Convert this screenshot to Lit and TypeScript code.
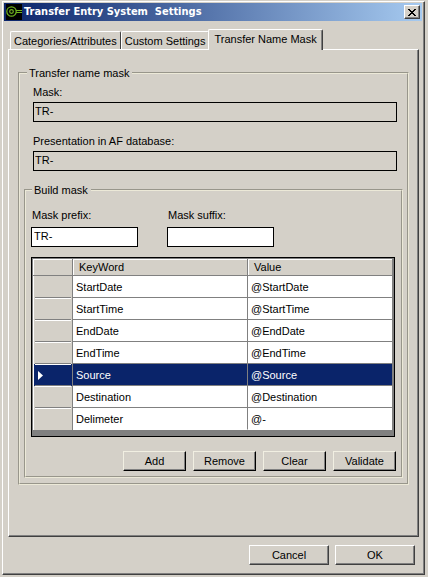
import { LitElement, html, css, svg, nothing } from "lit";
import { customElement, state } from "lit/decorators.js";
import { classMap } from "lit/directives/class-map.js";

interface Row {
  key: string;
  value: string;
}

const keyIcon = svg`
  <svg class="app-icon" viewBox="0 0 16 16" width="16" height="16" aria-hidden="true">
    <rect width="16" height="16" fill="#000" />
    <g fill="none" stroke="#6fb41e" stroke-width="1.2">
      <circle cx="5.5" cy="7.5" r="4.7" />
      <circle cx="5.5" cy="7.5" r="1.8" />
      <path d="M10 6.5H16M10 8.5H16" />
    </g>
  </svg>`;

@customElement("app-root")
export class AppRoot extends LitElement {
  static styles = css`
    :host {
      --face: #d4d0c8;
      --shadow: #808080;
      --dark: #404040;
      --navy: #0a246a;
      display: flex;
      box-sizing: border-box;
      min-height: 100vh;
      padding: 1px 3px 2px 2px;
      background: var(--face);
      color: #000;
      font: 11px/16px "Liberation Sans", Arial, sans-serif;
    }
    *, *::before, *::after { box-sizing: border-box; }
    button, input { font: inherit; color: inherit; border-radius: 0; margin: 0; }
    .window {
      flex: 1;
      min-width: 0;
      display: flex;
      flex-direction: column;
      padding: 1px 2px 1px 1px;
      border: 1px solid;
      border-color: #fff var(--dark) var(--dark) #fff;
      box-shadow: inset -1px -1px var(--shadow);
    }
    .titlebar {
      display: flex;
      align-items: center;
      gap: 2px;
      height: 18px;
      padding: 0 2px;
      background: linear-gradient(90deg, var(--navy), #a6caf0);
    }
    .app-icon { flex: none; display: block; }
    .title {
      flex: 1;
      margin: 0;
      color: #fff;
      font: bold 11px/16px "DejaVu Sans Condensed", "Noto Sans", sans-serif;
      white-space: pre;
    }
    .close {
      display: grid;
      place-items: center;
      width: 16px;
      height: 14px;
      padding: 0;
    }
    .btn, .close {
      background: var(--face);
      border: 1px solid;
      border-color: #fff var(--dark) var(--dark) #fff;
      box-shadow: inset -1px -1px var(--shadow);
    }
    .btn { width: 80px; height: 20px; padding: 0; }
    .btn.small {
      width: 63px;
      border-color: #f1efe2 #000 #000 #f1efe2;
    }
    .body {
      flex: 1;
      display: flex;
      flex-direction: column;
      padding: 8px 3px 0 4px;
    }
    .tabs { display: flex; align-items: flex-end; padding-left: 2px; }
    .tab {
      height: 18px;
      padding: 0 3px;
      white-space: nowrap;
      background: var(--face);
      border: 1px solid #fff;
      border-right-color: var(--dark);
      border-bottom: 0;
      border-radius: 2px 2px 0 0;
    }
    .tab.active {
      position: relative;
      z-index: 1;
      height: 21px;
      margin: 0 0 -1px -1px;
      padding: 0 5px 2px;
      box-shadow: inset -1px 0 var(--shadow);
    }
    .panel {
      flex: 1;
      padding: 15px 9px 50px 9px;
      border: 1px solid;
      border-color: #fff var(--dark) var(--dark) #fff;
      box-shadow: inset -1px -1px var(--shadow);
    }
    fieldset {
      min-width: 0;
      margin: 0;
      padding: 0 4px 5px;
      border: 2px groove #ece9d8;
    }
    legend { height: 16px; margin-left: 3px; padding: 0 3px 0 2px; }
    .fields { display: grid; gap: 11px; padding: 3px 6px 11px 9px; }
    .field { display: grid; gap: 2px; }
    .text {
      width: 100%;
      min-width: 0;
      height: 20px;
      padding: 0 2px 2px;
      border: 1px solid #000;
      background: #fff;
      outline: 0;
    }
    .text.locked { padding: 0 1px 2px; background: var(--face); }
    .build { padding: 0 5px 5px; }
    .build > legend { margin-left: 1px; }
    .affixes { display: flex; gap: 29px; padding: 9px 0 10px; }
    .affixes .field { gap: 4px; width: 107px; }
    .affixes label { padding-left: 1px; }
    .grid {
      margin-right: 1px;
      padding: 1px 2px 6px 1px;
      border: 1px solid #000;
      background: var(--shadow);
    }
    table {
      width: 100%;
      table-layout: fixed;
      border-collapse: separate;
      border-spacing: 0;
    }
    .c-mark { width: 40px; }
    .c-key { width: 175px; }
    th, td { font-weight: normal; text-align: left; white-space: nowrap; }
    thead th {
      height: 17px;
      padding: 0 6px;
      line-height: 16px;
      background: var(--face);
      border: 0 solid var(--shadow);
      border-width: 0 1px 1px 0;
      box-shadow: inset 1px 1px #fff;
    }
    tbody td {
      height: 22px;
      padding: 0 3px;
      background: #fff;
      border: 0 solid var(--shadow);
      border-width: 0 1px 1px 0;
    }
    thead th:last-child, tbody td:last-child { border-right: 0; }
    tbody .mark {
      padding: 0 1px 0 2px;
      background: var(--face);
      border-bottom: 0;
      box-shadow: inset 1px 0 #fff;
    }
    .mark-in {
      display: flex;
      align-items: center;
      height: 22px;
      padding-left: 3px;
      border-top: 1px solid #fff;
      border-bottom: 1px solid var(--shadow);
    }
    .selected td, .selected .mark { background: var(--navy); color: #fff; }
    tbody tr:first-child .mark-in { border-top-color: transparent; }
    tbody tr:last-child .mark-in { border-bottom-color: transparent; }
    tbody tr:last-child td { border-bottom-color: #fff; }
    .actions { display: flex; justify-content: flex-end; gap: 7px; padding-top: 14px; }
    .footer { display: flex; justify-content: flex-end; gap: 6px; padding: 8px 4px 8px; }
  `;

  @state() private selected = 4;
  @state() private tab = 2;
  @state() private rows: Row[] = [
    "StartDate", "StartTime", "EndDate", "EndTime", "Source", "Destination",
  ].map((key) => ({ key, value: "@" + key })).concat({ key: "Delimeter", value: "@-" });

  private tabs = ["Categories/Attributes", "Custom Settings", "Transfer Name Mask"];

  private field(id: string, label: string, value: string, locked = false) {
    return html`<div class="field">
      <label for=${id}>${label}</label>
      <input id=${id} type="text" class=${classMap({ text: true, locked })}
        .value=${value} ?readonly=${locked} />
    </div>`;
  }

  private row(row: Row, i: number) {
    const on = i === this.selected;
    return html`<tr class=${classMap({ selected: on })} @click=${() => (this.selected = i)}>
      <td class="mark"><div class="mark-in">${on
        ? html`<svg width="5" height="9" viewBox="0 0 5 9" aria-hidden="true"><path d="M0 0L5 4.5L0 9Z" fill="#fff" /></svg>`
        : nothing}</div></td>
      <td>${row.key}</td>
      <td>${row.value}</td>
    </tr>`;
  }

  render() {
    return html`
      <div class="window" role="dialog" aria-labelledby="title">
        <header class="titlebar">
          ${keyIcon}
          <h1 class="title" id="title">Transfer Entry System  Settings</h1>
          <button class="close" aria-label="Close">
            <svg width="8" height="7" viewBox="0 0 8 7" aria-hidden="true" shape-rendering="crispEdges">
              <path fill="#000" d="M0 0h2v1h1v1h2v-1h1v-1h2v1h-1v1h-1v1h-1v1h1v1h1v1h1v1h-2v-1h-1v-1h-2v1h-1v1h-2v-1h1v-1h1v-1h1v-1h-1v-1h-1v-1h-1z" />
            </svg>
          </button>
        </header>
        <div class="body">
          <div class="tabs" role="tablist">
            ${this.tabs.map((name, i) => html`<button role="tab" aria-selected=${i === this.tab}
              class=${classMap({ tab: true, active: i === this.tab })}
              @click=${() => (this.tab = i)}>${name}</button>`)}
          </div>
          <div class="panel" role="tabpanel">
            <fieldset>
              <legend>Transfer name mask</legend>
              <div class="fields">
                ${this.field("mask", "Mask:", "TR-", true)}
                ${this.field("presentation", "Presentation in AF database:", "TR-", true)}
              </div>
              <fieldset class="build">
                <legend>Build mask</legend>
                <div class="affixes">
                  ${this.field("prefix", "Mask prefix:", "TR-")}
                  ${this.field("suffix", "Mask suffix:", "")}
                </div>
                <div class="grid">
                  <table>
                    <colgroup><col class="c-mark" /><col class="c-key" /><col /></colgroup>
                    <thead><tr><th></th><th>KeyWord</th><th>Value</th></tr></thead>
                    <tbody>${this.rows.map((r, i) => this.row(r, i))}</tbody>
                  </table>
                </div>
                <div class="actions">
                  ${["Add", "Remove", "Clear", "Validate"].map((t) => html`<button class="btn small">${t}</button>`)}
                </div>
              </fieldset>
            </fieldset>
          </div>
          <footer class="footer">
            <button class="btn">Cancel</button>
            <button class="btn">OK</button>
          </footer>
        </div>
      </div>`;
  }
}
